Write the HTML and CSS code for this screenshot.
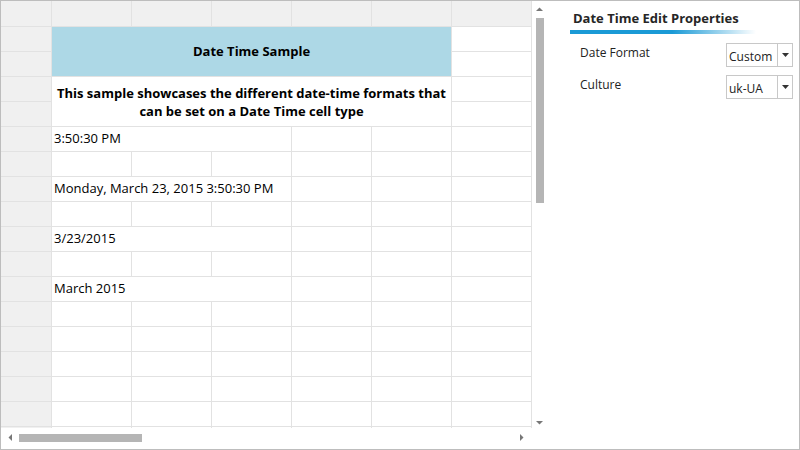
FILE: index.html
```html
<!DOCTYPE html>
<html>
<head>
<meta charset="utf-8">
<link rel="stylesheet" href="styles.css">
</head>
<body>
<div class="app">
  <div class="sheet-area">
    <div class="sheet-top">
      <div class="sheet">
        <div class="grid">
          <div class="hdr corner"></div>
          <div class="hdr"></div><div class="hdr"></div><div class="hdr"></div><div class="hdr"></div><div class="hdr"></div><div class="hdr"></div>

          <div class="rh r2"></div>
          <div class="cell title">Date Time Sample</div>
          <div class="cell c7 r2"></div>
          <div class="rh r3"></div>
          <div class="cell c7 r3"></div>

          <div class="rh r4"></div>
          <div class="cell desc">This sample showcases the different date-time formats that can be set on a Date Time cell type</div>
          <div class="cell c7 r4"></div>
          <div class="rh r5"></div>
          <div class="cell c7 r5"></div>

          <div class="rh"></div><div class="cell val">3:50:30 PM</div><div class="cell"></div><div class="cell"></div><div class="cell"></div>
          <div class="rh"></div><div class="cell"></div><div class="cell"></div><div class="cell"></div><div class="cell"></div><div class="cell"></div><div class="cell"></div>
          <div class="rh"></div><div class="cell val">Monday, March 23, 2015 3:50:30 PM</div><div class="cell"></div><div class="cell"></div><div class="cell"></div>
          <div class="rh"></div><div class="cell"></div><div class="cell"></div><div class="cell"></div><div class="cell"></div><div class="cell"></div><div class="cell"></div>
          <div class="rh"></div><div class="cell val">3/23/2015</div><div class="cell"></div><div class="cell"></div><div class="cell"></div>
          <div class="rh"></div><div class="cell"></div><div class="cell"></div><div class="cell"></div><div class="cell"></div><div class="cell"></div><div class="cell"></div>
          <div class="rh"></div><div class="cell val">March 2015</div><div class="cell"></div><div class="cell"></div><div class="cell"></div>
          <div class="rh"></div><div class="cell"></div><div class="cell"></div><div class="cell"></div><div class="cell"></div><div class="cell"></div><div class="cell"></div>
          <div class="rh"></div><div class="cell"></div><div class="cell"></div><div class="cell"></div><div class="cell"></div><div class="cell"></div><div class="cell"></div>
          <div class="rh"></div><div class="cell"></div><div class="cell"></div><div class="cell"></div><div class="cell"></div><div class="cell"></div><div class="cell"></div>
          <div class="rh"></div><div class="cell"></div><div class="cell"></div><div class="cell"></div><div class="cell"></div><div class="cell"></div><div class="cell"></div>
          <div class="rh"></div><div class="cell"></div><div class="cell"></div><div class="cell"></div><div class="cell"></div><div class="cell"></div><div class="cell"></div>
          <div class="rh"></div><div class="cell"></div><div class="cell"></div><div class="cell"></div><div class="cell"></div><div class="cell"></div><div class="cell"></div>
        </div>
      </div>
      <div class="vscroll">
        <svg class="arrow" width="9" height="6" viewBox="0 0 9 6"><path d="M4.5 1.5 L8 5 L1 5 Z" fill="#777"/></svg>
        <div class="vtrack"><div class="vthumb"></div></div>
        <svg class="arrow" width="9" height="6" viewBox="0 0 9 6"><path d="M1 1 L8 1 L4.5 4.5 Z" fill="#777"/></svg>
      </div>
    </div>
    <div class="hscroll">
      <svg class="arrow" width="6" height="9" viewBox="0 0 6 9"><path d="M1.5 4.5 L5 1 L5 8 Z" fill="#777"/></svg>
      <div class="htrack"><div class="hthumb"></div></div>
      <svg class="arrow" width="6" height="9" viewBox="0 0 6 9"><path d="M1 1 L4.5 4.5 L1 8 Z" fill="#777"/></svg>
    </div>
  </div>

  <div class="panel">
    <div class="panel-title">Date Time Edit Properties</div>
    <div class="panel-bar"></div>
    <div class="prop">
      <span class="prop-label">Date Format</span>
      <div class="combo"><span class="combo-text">Custom</span><span class="combo-btn"><svg width="7" height="4" viewBox="0 0 7 4"><path d="M0 0 L7 0 L3.5 4 Z" fill="#333"/></svg></span></div>
    </div>
    <div class="prop">
      <span class="prop-label">Culture</span>
      <div class="combo"><span class="combo-text">uk-UA</span><span class="combo-btn"><svg width="7" height="4" viewBox="0 0 7 4"><path d="M0 0 L7 0 L3.5 4 Z" fill="#333"/></svg></span></div>
    </div>
  </div>
</div>
</body>
</html>
```

FILE: styles.css
```css
* { box-sizing: border-box; }
html, body { margin: 0; padding: 0; background: #fff; }
body { font-family: "Open Sans", "Noto Sans", sans-serif; color: #000; }

.app {
  width: 800px;
  height: 450px;
  border: 1px solid #bdbdbd;
  display: flex;
  overflow: hidden;
}

.sheet-area {
  width: 546px;
  display: flex;
  flex-direction: column;
}

.sheet-top {
  display: flex;
  height: 427px;
}

.sheet {
  width: 531px;
  height: 427px;
  overflow: hidden;
}

.grid {
  display: grid;
  grid-template-columns: 50px repeat(6, 79px);
  grid-template-rows: 25px repeat(17, 24px);
  gap: 1px;
  background: #e2e2e2;
  padding-right: 1px;
  width: 531px;
}

.hdr, .rh { background: #f0f0f0; }
.cell { background: #fff; }

.title {
  grid-column: 2 / 7;
  grid-row: 2 / 4;
  background: #add8e6;
  display: flex;
  align-items: center;
  justify-content: center;
  font-weight: bold;
  font-size: 13px;
  padding-bottom: 2px;
}

.desc {
  grid-column: 2 / 7;
  grid-row: 4 / 6;
  display: flex;
  align-items: center;
  justify-content: center;
  text-align: center;
  font-weight: bold;
  font-size: 13px;
  line-height: 18px;
  padding: 0 2px;
}

.c7 { grid-column: 7; }
.r2 { grid-row: 2; }
.r3 { grid-row: 3; }
.r4 { grid-row: 4; }
.r5 { grid-row: 5; }

.val {
  grid-column: span 3;
  font-size: 13px;
  line-height: 22px;
  padding-left: 2px;
  white-space: nowrap;
}

.vscroll {
  width: 15px;
  display: flex;
  flex-direction: column;
  align-items: center;
  padding: 5px 0 2px;
}
.vtrack { flex: 1; width: 100%; padding: 6px 0 0 4px; }
.vthumb { width: 8px; height: 185px; background: #b5b5b5; }

.hscroll {
  height: 21px;
  width: 531px;
  display: flex;
  align-items: center;
  padding: 0 7px 2px 6px;
}
.htrack { flex: 1; padding-left: 6px; }
.hthumb { width: 123px; height: 8px; background: #b5b5b5; }

.arrow { display: block; flex: none; }

.panel {
  flex: 1;
  padding: 8px 6px 0 23px;
  font-family: "Open Sans", "Noto Sans", sans-serif;
  color: #222;
}

.panel-title {
  font-weight: bold;
  font-size: 13px;
  line-height: 18px;
  padding-left: 3px;
  color: #262626;
}

.panel-bar {
  width: 186px;
  height: 4px;
  margin-top: 3px;
  background: linear-gradient(to right, #1a9ad6 0%, #1a9ad6 55%, rgba(26,154,214,0) 100%);
}

.prop {
  display: flex;
  align-items: flex-start;
  justify-content: space-between;
  padding-left: 10px;
  margin-top: 9px;
}
.prop + .prop { margin-top: 8px; }

.prop-label { font-size: 12px; line-height: 18px; margin-top: 1px; }

.combo {
  width: 67px;
  height: 24px;
  border: 1px solid #c8c8c8;
  display: flex;
}
.combo-text {
  flex: 1;
  font-size: 12px;
  line-height: 22px;
  padding-left: 2px;
  padding-top: 2px;
}
.combo-btn {
  width: 15px;
  border-left: 1px solid #c8c8c8;
  display: flex;
  align-items: center;
  justify-content: center;
}
```
